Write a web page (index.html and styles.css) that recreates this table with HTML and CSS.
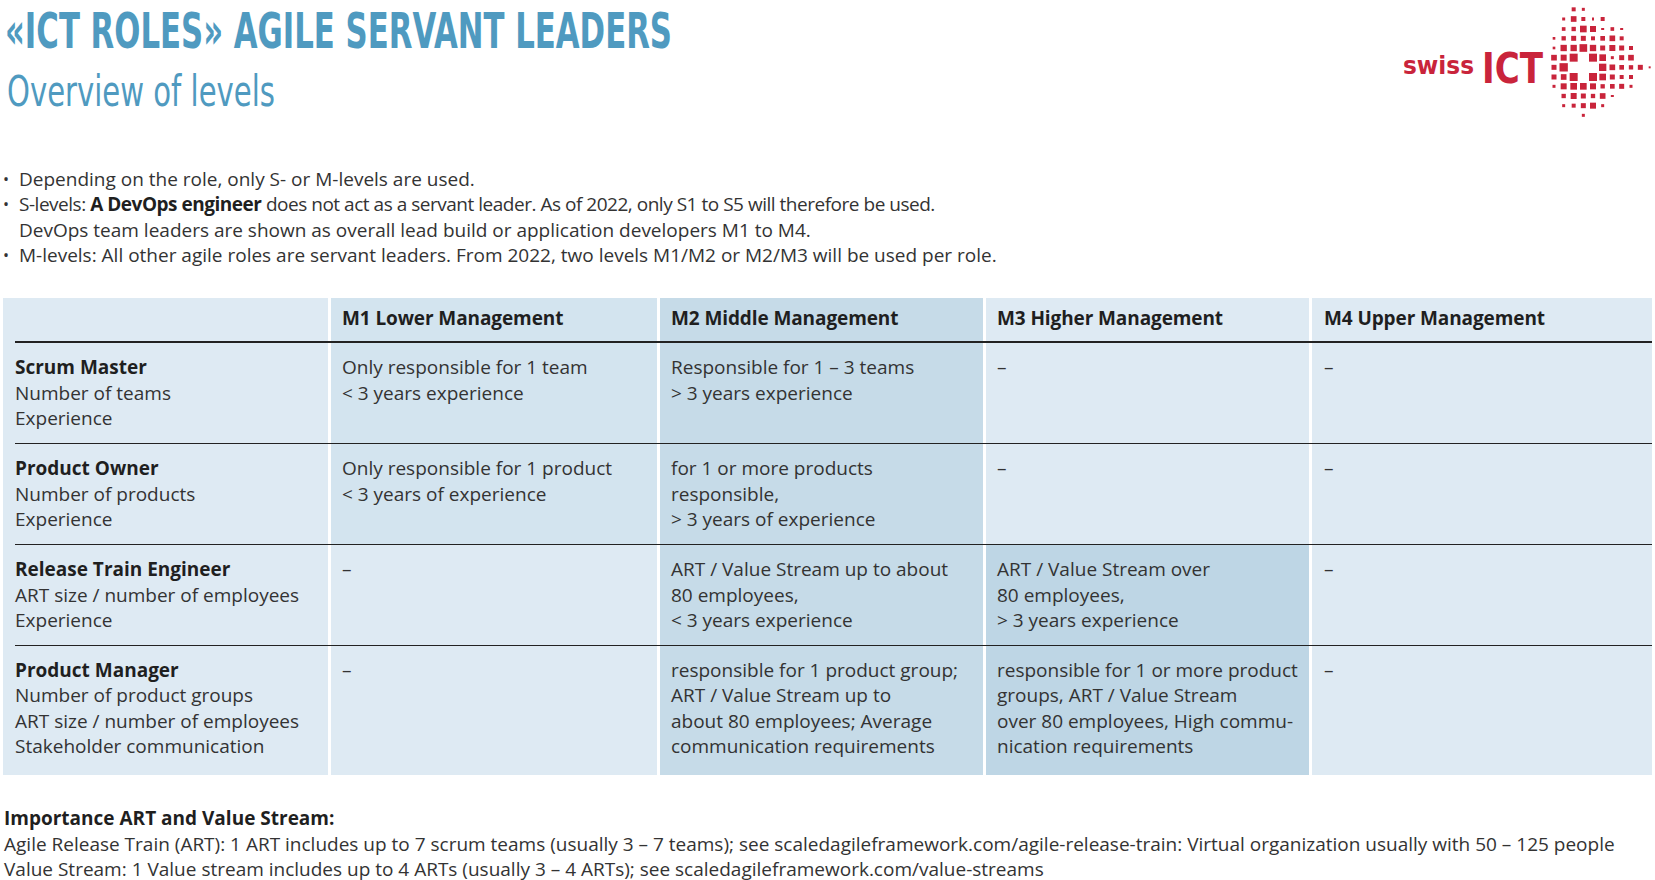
FILE: index.html
```html
<!DOCTYPE html>
<html lang="en">
<head>
<meta charset="utf-8">
<title>«ICT Roles» Agile Servant Leaders – Overview of levels</title>
<link rel="stylesheet" href="styles.css">
</head>
<body>
<div class="page">
  <header class="top">
    <svg class="titles" width="690" height="124" viewBox="0 0 690 124">
      <text class="title" x="5" y="48" textLength="667" lengthAdjust="spacingAndGlyphs">«ICT ROLES» AGILE SERVANT LEADERS</text>
      <text class="subtitle" x="7" y="106" textLength="268" lengthAdjust="spacingAndGlyphs">Overview of levels</text>
    </svg>
    <svg class="logo" width="260" height="125" viewBox="1395 0 260 125">
      <text class="logo-swiss" x="1403" y="74" textLength="71" lengthAdjust="spacingAndGlyphs">swiss</text>
      <text class="logo-ict" x="1482" y="83" textLength="61" lengthAdjust="spacingAndGlyphs">ICT</text>
      <g class="dots" transform="translate(1530 0) scale(0.33333)">
        <rect x="125" y="22" width="12" height="12"/>
        <rect x="155.5" y="23.5" width="9" height="9"/>
        <rect x="96.5" y="52.5" width="9" height="9"/>
        <rect x="122.5" y="48.5" width="17" height="17"/>
        <rect x="154" y="51" width="12" height="12"/>
        <rect x="186" y="52.5" width="6" height="9"/>
        <rect x="212" y="51" width="12" height="12"/>
        <rect x="95.5" y="81.5" width="11" height="11"/>
        <rect x="124.5" y="80.5" width="13" height="13"/>
        <rect x="150" y="77" width="20" height="20"/>
        <rect x="180" y="78" width="18" height="18"/>
        <rect x="213.5" y="84" width="9" height="6"/>
        <rect x="241.5" y="81.5" width="11" height="11"/>
        <rect x="270.5" y="84" width="9" height="6"/>
        <rect x="68" y="111" width="8" height="8"/>
        <rect x="94.5" y="108.5" width="13" height="13"/>
        <rect x="123.5" y="107.5" width="15" height="15"/>
        <rect x="152.5" y="107.5" width="15" height="15"/>
        <rect x="183" y="109" width="12" height="12"/>
        <rect x="211" y="108" width="14" height="14"/>
        <rect x="238.5" y="106.5" width="17" height="17"/>
        <rect x="269" y="109" width="12" height="12"/>
        <rect x="68" y="140" width="8" height="8"/>
        <rect x="91.5" y="134.5" width="19" height="19"/>
        <rect x="121.5" y="134.5" width="19" height="19"/>
        <rect x="148.5" y="132.5" width="23" height="23"/>
        <rect x="179.5" y="134.5" width="19" height="19"/>
        <rect x="210.5" y="136.5" width="15" height="15"/>
        <rect x="238" y="135" width="18" height="18"/>
        <rect x="267.5" y="136.5" width="15" height="15"/>
        <rect x="297" y="138" width="12" height="12"/>
        <rect x="63.5" y="164.5" width="17" height="17"/>
        <rect x="92" y="164" width="18" height="18"/>
        <rect x="119" y="161" width="24" height="24"/>
        <rect x="177" y="161" width="24" height="24"/>
        <rect x="208" y="163" width="20" height="20"/>
        <rect x="242.5" y="168.5" width="9" height="9"/>
        <rect x="267.5" y="165.5" width="15" height="15"/>
        <rect x="294.5" y="164.5" width="17" height="17"/>
        <rect x="64.5" y="194.5" width="15" height="15"/>
        <rect x="88.5" y="189.5" width="25" height="25"/>
        <rect x="207" y="191" width="22" height="22"/>
        <rect x="238.5" y="193.5" width="17" height="17"/>
        <rect x="268" y="195" width="14" height="14"/>
        <rect x="296.5" y="195.5" width="13" height="13"/>
        <rect x="323.5" y="194.5" width="15" height="15"/>
        <rect x="356" y="199" width="6" height="6"/>
        <rect x="64.5" y="223.5" width="15" height="15"/>
        <rect x="92.5" y="222.5" width="17" height="17"/>
        <rect x="119" y="219" width="24" height="24"/>
        <rect x="177" y="219" width="24" height="24"/>
        <rect x="208" y="221" width="20" height="20"/>
        <rect x="239.5" y="223.5" width="15" height="15"/>
        <rect x="269" y="225" width="12" height="12"/>
        <rect x="297" y="225" width="12" height="12"/>
        <rect x="67.5" y="254.5" width="9" height="9"/>
        <rect x="92" y="250" width="18" height="18"/>
        <rect x="121" y="249" width="20" height="20"/>
        <rect x="150" y="249" width="20" height="20"/>
        <rect x="180" y="250" width="18" height="18"/>
        <rect x="211.5" y="252.5" width="13" height="13"/>
        <rect x="240" y="252" width="14" height="14"/>
        <rect x="267.5" y="251.5" width="15" height="15"/>
        <rect x="298.5" y="254.5" width="9" height="9"/>
        <rect x="94.5" y="281.5" width="13" height="13"/>
        <rect x="122" y="279" width="18" height="18"/>
        <rect x="152.5" y="280.5" width="15" height="15"/>
        <rect x="182.5" y="281.5" width="13" height="13"/>
        <rect x="209.5" y="279.5" width="17" height="17"/>
        <rect x="242.5" y="285" width="9" height="6"/>
        <rect x="96.5" y="312.5" width="9" height="9"/>
        <rect x="125" y="311" width="12" height="12"/>
        <rect x="152.5" y="309.5" width="15" height="15"/>
        <rect x="180" y="308" width="18" height="18"/>
        <rect x="213.5" y="312.5" width="9" height="9"/>
        <rect x="155.5" y="341.5" width="9" height="9"/>
      </g>
    </svg>
  </header>

  <ul class="notes">
    <li><span class="dot">•</span><span>Depending on the role, only S- or M-levels are used.</span></li>
    <li><span class="dot">•</span><span><span class="tight">S-levels: <b>A DevOps engineer</b> does not act as a servant leader. As of 2022, only S1 to S5 will therefore be used.</span><br>DevOps team leaders are shown as overall lead build or application developers M1 to M4.</span></li>
    <li><span class="dot">•</span><span>M-levels: All other agile roles are servant leaders. From 2022, two levels M1/M2 or M2/M3 will be used per role.</span></li>
  </ul>

  <div class="table">
    <div class="cell head l first"></div>
    <div class="cell head m">M1 Lower Management</div>
    <div class="cell head d">M2 Middle Management</div>
    <div class="cell head l">M3 Higher Management</div>
    <div class="cell head l last">M4 Upper Management</div>
    <div class="rule thick"></div>

    <div class="cell l first"><b>Scrum Master</b><br>Number of teams<br>Experience</div>
    <div class="cell m">Only responsible for 1 team<br>&lt; 3 years experience</div>
    <div class="cell d">Responsible for 1 – 3 teams<br>&gt; 3 years experience</div>
    <div class="cell l">–</div>
    <div class="cell l last">–</div>
    <div class="rule"></div>

    <div class="cell l first"><b>Product Owner</b><br>Number of products<br>Experience</div>
    <div class="cell m">Only responsible for 1 product<br>&lt; 3 years of experience</div>
    <div class="cell d">for 1 or more products<br>responsible,<br>&gt; 3 years of experience</div>
    <div class="cell l">–</div>
    <div class="cell l last">–</div>
    <div class="rule"></div>

    <div class="cell l first"><b>Release Train Engineer</b><br>ART size / number of employees<br>Experience</div>
    <div class="cell l">–</div>
    <div class="cell d">ART / Value Stream up to about<br>80 employees,<br>&lt; 3 years experience</div>
    <div class="cell dd">ART / Value Stream over<br>80 employees,<br>&gt; 3 years experience</div>
    <div class="cell l last">–</div>
    <div class="rule"></div>

    <div class="cell l first end"><b>Product Manager</b><br>Number of product groups<br>ART size / number of employees<br>Stakeholder communication</div>
    <div class="cell l end">–</div>
    <div class="cell d end">responsible for 1 product group;<br>ART / Value Stream up to<br>about 80 employees; Average<br>communication requirements</div>
    <div class="cell dd end">responsible for 1 or more product<br>groups, ART / Value Stream<br>over 80 employees, High commu-<br>nication requirements</div>
    <div class="cell l end last">–</div>
  </div>

  <div class="footnote">
    <b>Importance ART and Value Stream:</b><br>
    Agile Release Train (ART): 1 ART includes up to 7 scrum teams (usually 3 – 7 teams); see scaledagileframework.com/agile-release-train: Virtual organization usually with 50 – 125 people<br>
    Value Stream: 1 Value stream includes up to 4 ARTs (usually 3 – 4 ARTs); see scaledagileframework.com/value-streams
  </div>
</div>
</body>
</html>
```

FILE: styles.css
```css
:root {
  --blue: #4f9ac0;
  --red: #c9243b;
  --c-light: #deeaf3;
  --c-mid: #d3e4ef;
  --c-dark: #c6dbe8;
  --c-darker: #bed6e5;
  --text: #333333;
  --ink: #1f1f1f;
}

* { box-sizing: border-box; }

html, body {
  margin: 0;
  padding: 0;
  background: #ffffff;
}

body {
  font-family: "Open Sans", "DejaVu Sans", sans-serif;
  font-size: 19px;
  color: var(--text);
  width: 1655px;
}

.page {
  width: 1655px;
}

.top {
  display: flex;
  justify-content: space-between;
  align-items: flex-start;
  height: 167px;
}

.titles, .logo {
  display: block;
  overflow: visible;
}

.title {
  font-family: "Liberation Sans Narrow", "DejaVu Sans Condensed", sans-serif;
  font-weight: 700;
  font-size: 50px;
  fill: var(--blue);
}

.subtitle {
  font-family: "Liberation Sans Narrow", "DejaVu Sans Condensed", sans-serif;
  font-weight: 400;
  font-size: 42px;
  fill: var(--blue);
}

.logo-swiss {
  font-family: "DejaVu Sans", sans-serif;
  font-weight: 700;
  font-size: 25px;
  fill: var(--red);
}

.logo-ict {
  font-family: "Liberation Sans Narrow", "DejaVu Sans Condensed", sans-serif;
  font-weight: 700;
  font-size: 43px;
  fill: var(--red);
}

.dots rect { fill: var(--red); }

.notes {
  list-style: none;
  margin: 0;
  padding: 0;
  line-height: 25.3px;
}

.notes li {
  display: grid;
  grid-template-columns: 19px auto;
}

.notes .dot {
  padding-left: 3px;
  font-size: 16px;
}

.notes .tight {
  letter-spacing: -0.48px;
}

.notes b, .cell b, .footnote b {
  font-weight: 700;
  color: var(--ink);
}

.table {
  display: grid;
  grid-template-columns: 325px 326px 323px 323px 340px;
  column-gap: 3px;
  margin: 30px 0 0 3px;
  width: 1649px;
}

.cell {
  padding: 12px 8px 12px 11px;
  line-height: 25.3px;
  white-space: nowrap;
}

.cell.first,
.cell.last { padding-left: 12px; }

.cell.head {
  padding-top: 8px;
  padding-bottom: 10px;
  font-weight: 700;
  color: var(--ink);
  letter-spacing: -0.1px;
}

.cell.end { padding-bottom: 16px; }

.l { background: var(--c-light); }
.m { background: var(--c-mid); }
.d { background: var(--c-dark); }
.dd { background: var(--c-darker); }

.rule {
  grid-column: 1 / -1;
  height: 1px;
  background: #222222;
  border-left: 12px solid var(--c-light);
}

.rule.thick {
  height: 2px;
}

.footnote {
  margin-top: 31px;
  padding-left: 4px;
  line-height: 25.3px;
  white-space: nowrap;
}
```
